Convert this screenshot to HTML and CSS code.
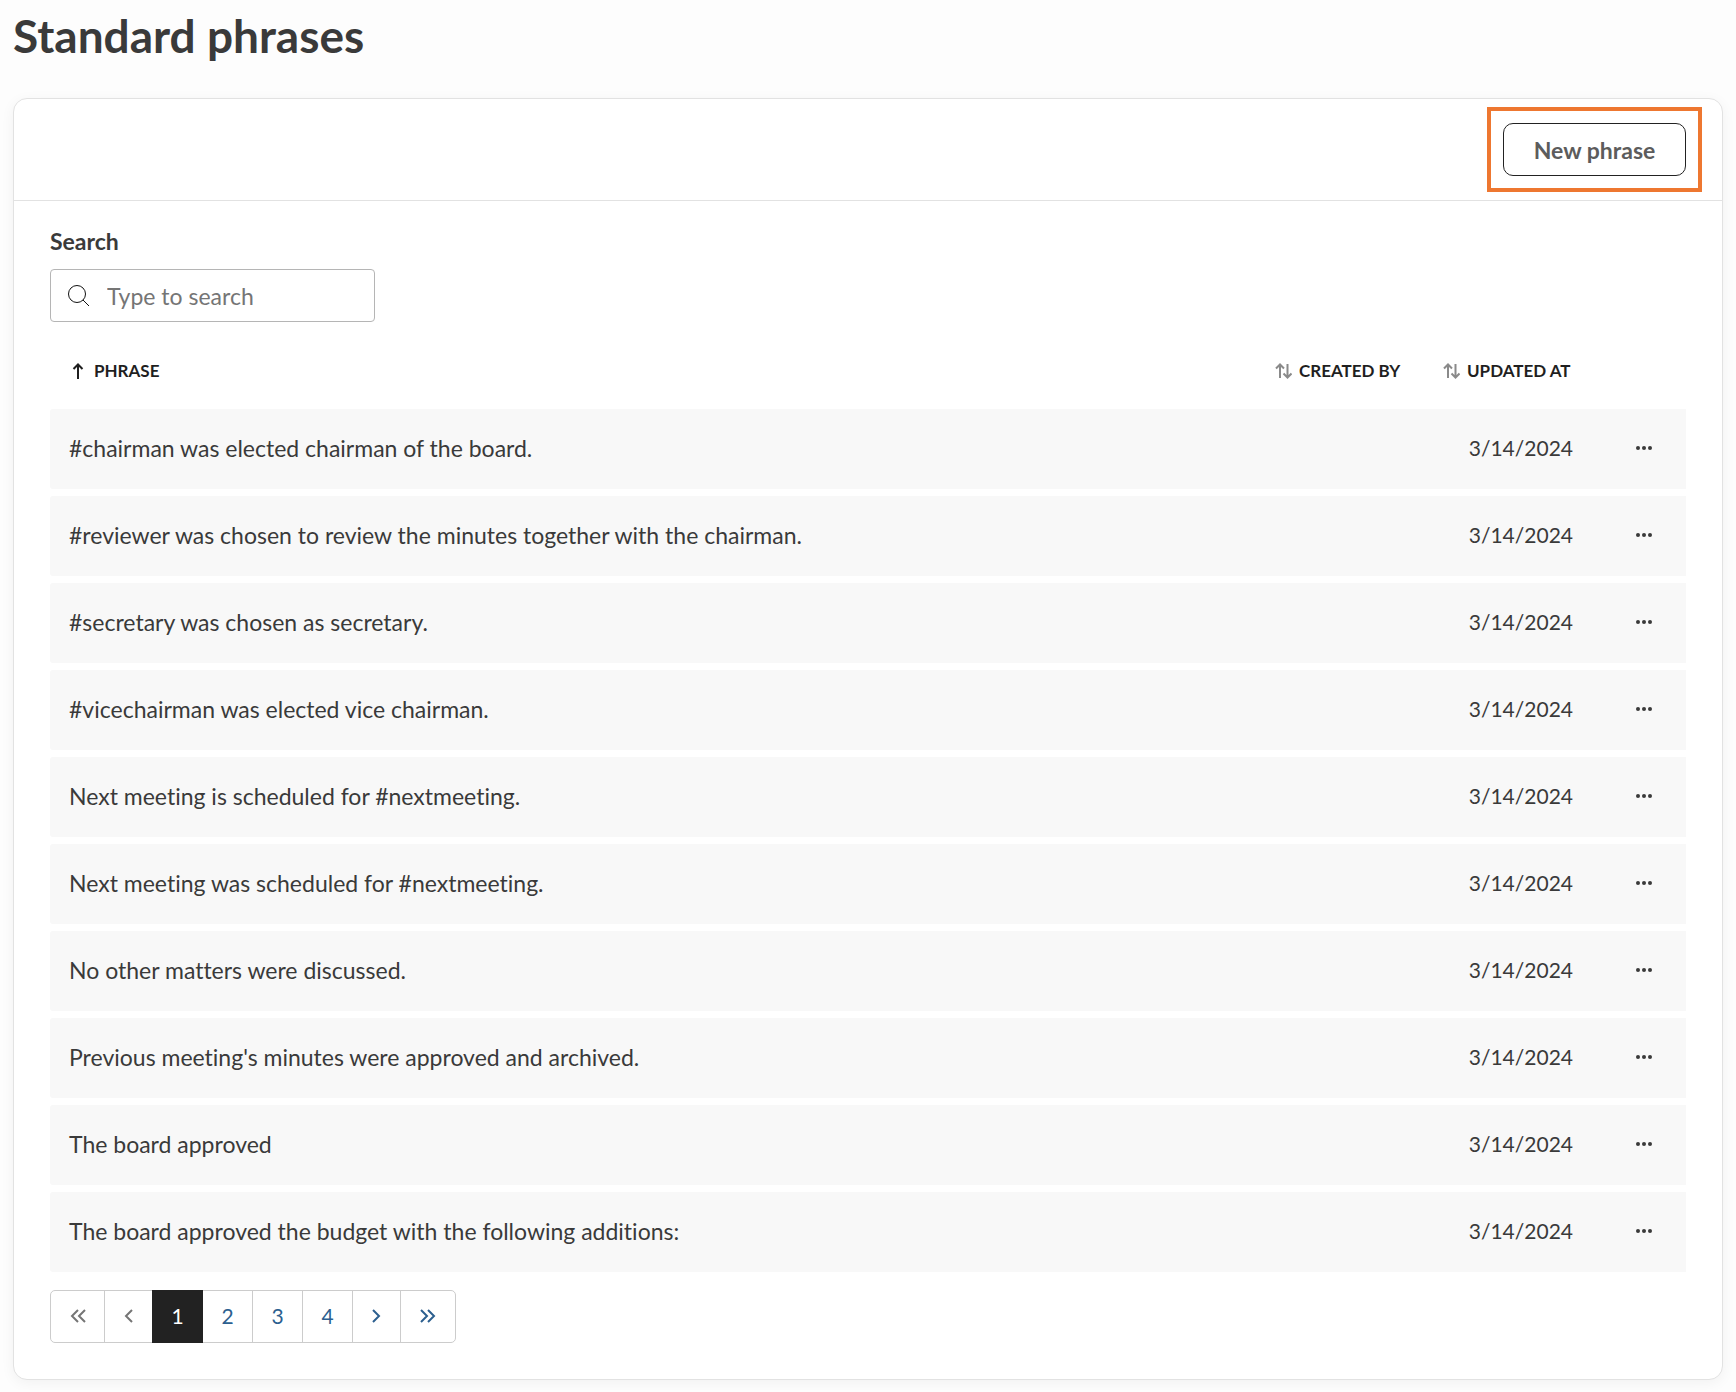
FILE: index.html
```
<!DOCTYPE html>
<html lang="en">
<head>
    <meta charset="UTF-8">
    <meta name="viewport" content="width=device-width, initial-scale=1.0">
    <title>Standard phrases</title>
    <link rel="stylesheet" href="styles.css">
</head>
<body>
    <!-- shared icons -->
    <svg class="sprite" aria-hidden="true">
        <symbol id="sort" viewBox="0 0 17 16">
            <path d="M5 15V1.5M1 5.5l4-4 4 4M12.500 1v13.500M8.500 10.500l4 4 4-4"/>
        </symbol>
        <symbol id="dots" viewBox="0 0 16 4">
            <circle cx="2" cy="2" r="2"/><circle cx="8" cy="2" r="2"/><circle cx="14" cy="2" r="2"/>
        </symbol>
    </svg>

    <h1 class="title">Standard phrases</h1>

    <main class="card">
        <div class="card-header">
            <button class="btn-new" type="button">New phrase</button>
        </div>

        <div class="card-body">
            <label class="search-label" for="search">Search</label>
            <div class="search-box">
                <svg class="search-icon" viewBox="0 0 22 22"><circle cx="9" cy="9" r="8.500"/><path d="M15 15l6 6"/></svg>
                <input class="search-input" type="text" id="search" name="search" placeholder="Type to search">
            </div>

            <table class="tab">
                <thead>
                    <tr>
                        <th><button class="sort" type="button"><svg class="arrow-up" viewBox="0 0 12 17"><path d="M6 16V1.500M1.500 6L6 1.500 10.500 6"/></svg>PHRASE</button></th>
                        <th class="col-sort"><button class="sort" type="button"><svg class="arrows"><use href="#sort"/></svg>CREATED BY</button></th>
                        <th class="col-sort"><button class="sort" type="button"><svg class="arrows"><use href="#sort"/></svg>UPDATED AT</button></th>
                        <th class="col-actions"></th>
                    </tr>
                </thead>
                <tbody>
                    <tr>
                        <td>#chairman was elected chairman of the board.</td>
                        <td></td>
                        <td class="date">3/14/2024</td>
                        <td class="actions"><button class="more" type="button" aria-label="More"><svg class="dots"><use href="#dots"/></svg></button></td>
                    </tr>
                    <tr>
                        <td>#reviewer was chosen to review the minutes together with the chairman.</td>
                        <td></td>
                        <td class="date">3/14/2024</td>
                        <td class="actions"><button class="more" type="button" aria-label="More"><svg class="dots"><use href="#dots"/></svg></button></td>
                    </tr>
                    <tr>
                        <td>#secretary was chosen as secretary.</td>
                        <td></td>
                        <td class="date">3/14/2024</td>
                        <td class="actions"><button class="more" type="button" aria-label="More"><svg class="dots"><use href="#dots"/></svg></button></td>
                    </tr>
                    <tr>
                        <td>#vicechairman was elected vice chairman.</td>
                        <td></td>
                        <td class="date">3/14/2024</td>
                        <td class="actions"><button class="more" type="button" aria-label="More"><svg class="dots"><use href="#dots"/></svg></button></td>
                    </tr>
                    <tr>
                        <td>Next meeting is scheduled for #nextmeeting.</td>
                        <td></td>
                        <td class="date">3/14/2024</td>
                        <td class="actions"><button class="more" type="button" aria-label="More"><svg class="dots"><use href="#dots"/></svg></button></td>
                    </tr>
                    <tr>
                        <td>Next meeting was scheduled for #nextmeeting.</td>
                        <td></td>
                        <td class="date">3/14/2024</td>
                        <td class="actions"><button class="more" type="button" aria-label="More"><svg class="dots"><use href="#dots"/></svg></button></td>
                    </tr>
                    <tr>
                        <td>No other matters were discussed.</td>
                        <td></td>
                        <td class="date">3/14/2024</td>
                        <td class="actions"><button class="more" type="button" aria-label="More"><svg class="dots"><use href="#dots"/></svg></button></td>
                    </tr>
                    <tr>
                        <td>Previous meeting's minutes were approved and archived.</td>
                        <td></td>
                        <td class="date">3/14/2024</td>
                        <td class="actions"><button class="more" type="button" aria-label="More"><svg class="dots"><use href="#dots"/></svg></button></td>
                    </tr>
                    <tr>
                        <td>The board approved</td>
                        <td></td>
                        <td class="date">3/14/2024</td>
                        <td class="actions"><button class="more" type="button" aria-label="More"><svg class="dots"><use href="#dots"/></svg></button></td>
                    </tr>
                    <tr>
                        <td>The board approved the budget with the following additions:</td>
                        <td></td>
                        <td class="date">3/14/2024</td>
                        <td class="actions"><button class="more" type="button" aria-label="More"><svg class="dots"><use href="#dots"/></svg></button></td>
                    </tr>
                </tbody>
            </table>

            <nav class="pager" aria-label="Pages">
                <button class="page wide" type="button" disabled aria-label="First page"><svg class="chevrons" viewBox="0 0 16 14"><path d="M8 1L2 7l6 6M15 1L9 7l6 6"/></svg></button>
                <button class="page narrow" type="button" disabled aria-label="Previous page"><svg class="chevron" viewBox="0 0 9 14"><path d="M8 1L2 7l6 6"/></svg></button>
                <a class="page current" href="#" aria-current="page">1</a>
                <a class="page" href="#">2</a>
                <a class="page" href="#">3</a>
                <a class="page" href="#">4</a>
                <a class="page narrow" href="#" aria-label="Next page"><svg class="chevron" viewBox="0 0 9 14"><path d="M1 1l6 6-6 6"/></svg></a>
                <a class="page wide" href="#" aria-label="Last page"><svg class="chevrons" viewBox="0 0 16 14"><path d="M1 1l6 6-6 6M8 1l6 6-6 6"/></svg></a>
            </nav>
        </div>
    </main>
</body>
</html>
```
FILE: styles.css
```
* {
    box-sizing: border-box;
}

body {
    margin: 0;
    padding: 10px 13px;
    background-color: #fdfdfd;
    font-family: Lato, "Liberation Sans", sans-serif;
    font-size: 23px;
    line-height: 28px;
    font-variant-ligatures: none;
    color: #3a3a3a;
}

button,
input {
    font: inherit;
}

.sprite {
    display: none;
}

svg {
    fill: none;
    stroke: currentColor;
    stroke-width: 2px;
}

.title {
    margin: 0 0 36px;
    font-size: 46px;
    line-height: 52px;
    font-weight: bold;
}

/* card */
.card {
    background-color: white;
    border: 1px solid #e2e2e2;
    border-radius: 14px;
    box-shadow: 0 3px 14px rgba(0, 0, 0, 0.05);
}

.card-header {
    display: flex;
    justify-content: flex-end;
    padding: 24px 36px;
    border-bottom: 1px solid #e2e2e2;
}

.btn-new {
    position: relative;
    width: 183px;
    height: 53px;
    padding: 0;
    background-color: white;
    border: 1px solid #222;
    border-radius: 10px;
    font-weight: bold;
    color: #5c5c5c;
    cursor: pointer;
}

/* orange frame around the button */
.btn-new::after {
    content: "";
    position: absolute;
    inset: -17px;
    border: 4px solid #ee7730;
    pointer-events: none;
}

.card-body {
    padding: 26px 36px 36px;
}

/* search */
.search-label {
    display: block;
    margin-bottom: 14px;
    font-weight: bold;
}

.search-box {
    display: flex;
    align-items: center;
    width: 325px;
    height: 53px;
    padding: 0 17px;
    gap: 17px;
    border: 1px solid #b5b5b5;
    border-radius: 4px;
}

.search-icon {
    flex: none;
    width: 22px;
    height: 22px;
    stroke-width: 1px;
    color: #111;
}

.search-input {
    flex: 1;
    min-width: 0;
    padding: 0;
    border: none;
    outline: none;
    background: none;
    color: inherit;
}

.search-input::placeholder {
    color: #757575;
}

/* table */
.tab {
    width: 100%;
    margin: 11px 0;
    table-layout: fixed;
    border-collapse: separate;
    border-spacing: 0 7px;
}

.tab th {
    height: 62px;
    padding: 0 19px;
    text-align: left;
}

.col-sort {
    width: 168px;
}

.col-actions {
    width: 94px;
}

.tab td {
    height: 80px;
    padding: 0 19px 2px;
    background-color: #f8f8f8;
}

.tab td:first-child {
    border-radius: 3px 0 0 3px;
}

.sort {
    display: flex;
    align-items: center;
    gap: 7px;
    padding: 0;
    border: none;
    background: none;
    font-size: 17px;
    font-weight: bold;
    color: #1f1f1f;
    white-space: nowrap;
    cursor: pointer;
}

.arrow-up {
    width: 12px;
    height: 17px;
    margin: 0 3px;
}

.arrows {
    width: 17px;
    height: 16px;
    color: #8a8a8a;
}

.tab .date {
    font-size: 21px;
    text-align: right;
}

.tab .actions {
    padding-right: 9px;
}

.more {
    display: block;
    padding: 25px;
    border: none;
    background: none;
    color: inherit;
    cursor: pointer;
}

.dots {
    display: block;
    width: 16px;
    height: 4px;
    fill: currentColor;
    stroke: none;
}

/* pagination */
.pager {
    display: flex;
    width: max-content;
    border: 1px solid #ccc;
    border-radius: 5px;
}

.page {
    display: flex;
    align-items: center;
    justify-content: center;
    width: 50px;
    height: 51px;
    padding: 0 0 2px;
    border: none;
    border-right: 1px solid #ccc;
    background: none;
    font-size: 21px;
    color: #2c5f8f;
    text-decoration: none;
}

.page.narrow {
    width: 48px;
}

.page.wide {
    width: 54px;
}

.page:last-child {
    border-right: none;
}

.page:disabled {
    color: #757575;
}

.page.current {
    width: 51px;
    height: 53px;
    margin: -1px 0 -1px -1px;
    border: none;
    background-color: #222;
    color: white;
}

.chevron {
    width: 9px;
    height: 14px;
}

.chevrons {
    width: 16px;
    height: 14px;
}
```
